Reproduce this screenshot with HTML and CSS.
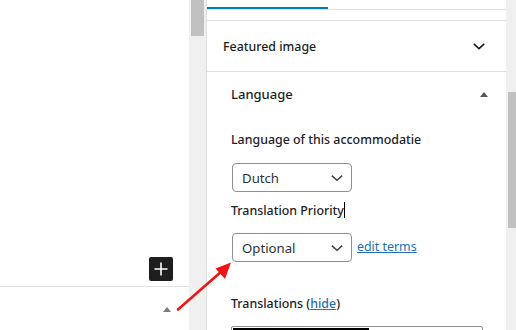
FILE: index.html
```html
<!DOCTYPE html>
<html>
    <head>
        <title>Language</title>
        <meta charset="UTF-8">
        <link rel="stylesheet" href="styles.css">
    </head>
    <body>
        <div class="canvas">
            <div class="canvas-space">
                <div class="inserter">
                    <svg width="24" height="24" viewBox="0 0 24 24"><path d="M12 5.5v13M5.5 12h13" stroke="#fff" stroke-width="1.6"/></svg>
                </div>
            </div>
            <div class="canvas-foot">
                <span class="tri tri-gray"></span>
            </div>
        </div>

        <div class="gutter"><div class="thumb"></div></div>

        <div class="sidebar">
            <div class="tabs">
                <div class="tab active"></div>
            </div>
            <div class="spacer"></div>

            <div class="panel">
                <span class="panel-title">Featured image</span>
                <svg class="chev" width="24" height="24" viewBox="0 0 24 24"><path d="M6.8 9.8 12 14.6l5.2-4.8" fill="none" stroke="#1e1e1e" stroke-width="1.6"/></svg>
            </div>

            <div class="postbox">
                <div class="postbox-head">
                    <span>Language</span>
                    <span class="tri"></span>
                </div>
                <div class="postbox-body">
                    <div class="label">Language of this accommodatie</div>
                    <div class="select sel-lang">
                        <span>Dutch</span>
                        <svg width="16" height="16" viewBox="0 0 16 16"><path d="M2.8 5.6 8 10.2l5.2-4.6" fill="none" stroke="#3c434a" stroke-width="1.5"/></svg>
                    </div>
                    <div class="label label-prio">Translation Priority<span class="caret"></span></div>
                    <div class="row">
                        <div class="select">
                            <span>Optional</span>
                            <svg width="16" height="16" viewBox="0 0 16 16"><path d="M2.8 5.6 8 10.2l5.2-4.6" fill="none" stroke="#3c434a" stroke-width="1.5"/></svg>
                        </div>
                        <a class="link" href="#">edit terms</a>
                    </div>
                    <div class="label label-trans">Translations (<a class="link" href="#">hide</a>)</div>
                    <div class="trans-box"><div class="trans-bar"></div></div>
                </div>
            </div>
        </div>

        <div class="rscroll"><div class="thumb"></div></div>

        <svg class="arrow" width="516" height="330" viewBox="0 0 516 330">
            <path d="M178 309.5 L222 271" stroke="#f01414" stroke-width="2.6" stroke-linecap="round"/>
            <path d="M231 262.5 L215.5 268.5 L225 279 Z" fill="#f01414"/>
        </svg>
    </body>
</html>
```

FILE: styles.css
```css
* { box-sizing: border-box; }

body {
    margin: 0;
    height: 330px;
    overflow: hidden;
    display: flex;
    font-family: "Noto Sans", "Open Sans", sans-serif;
    font-size: 12.4px;
    color: #1e1e1e;
    background: white;
    position: relative;
}

/* editor canvas */
.canvas {
    width: 189px;
    display: flex;
    flex-direction: column;
}

.canvas-space {
    flex: 1;
    display: flex;
    align-items: flex-end;
    justify-content: flex-end;
    padding: 0 16px 5px 0;
}

.inserter {
    width: 24px;
    height: 24px;
    background: #1e1e1e;
    border-radius: 2px;
    display: flex;
}

.canvas-foot {
    height: 44px;
    flex-shrink: 0;
    border-top: 1px solid #e0e0e0;
    display: flex;
    justify-content: flex-end;
    align-items: flex-start;
    padding: 20px 18px 0 0;
}

.tri {
    width: 0;
    height: 0;
    border-left: 4px solid transparent;
    border-right: 4px solid transparent;
    border-bottom: 5px solid #50575e;
}

.tri-gray { border-bottom-color: #787c82; }

/* scrollbars */
.gutter {
    width: 17px;
    flex-shrink: 0;
    background: #f0f0f0;
    padding: 0 2px;
}

.gutter .thumb {
    height: 36px;
    background: #c1c1c1;
}

.rscroll {
    width: 10px;
    flex-shrink: 0;
    background: #f0f0f0;
    padding: 92px 0 0 2px;
}

.rscroll .thumb {
    height: 136px;
    background: #c1c1c1;
}

/* sidebar */
.sidebar {
    width: 300px;
    flex-shrink: 0;
    border-left: 1px solid #e0e0e0;
    display: flex;
    flex-direction: column;
}

.sidebar > * { flex-shrink: 0; }

.tabs {
    height: 10px;
    border-bottom: 1px solid #e0e0e0;
    display: flex;
}

.tab.active {
    width: 121px;
    height: 10px;
    border-bottom: 2px solid #007cba;
    margin-top: -1px;
}

.spacer {
    height: 11px;
    border-bottom: 1px solid #e0e0e0;
}

.panel {
    height: 51px;
    border-bottom: 1px solid #e0e0e0;
    display: flex;
    align-items: center;
    justify-content: space-between;
    padding: 0 15px 0 16px;
}

.panel-title { font-weight: 500; }

.postbox-head {
    height: 44px;
    display: flex;
    align-items: center;
    justify-content: space-between;
    padding: 0 18px 0 24px;
    font-weight: 500;
    font-size: 13px;
}

.postbox-body {
    padding: 14px 0 0 24px;
}

.label {
    line-height: 20px;
    font-weight: 500;
    color: #1d2327;
}

.select {
    width: 120px;
    height: 29px;
    border: 1px solid #8c8f94;
    border-radius: 4px;
    display: flex;
    align-items: center;
    justify-content: space-between;
    padding: 0 6px 0 9px;
    font-size: 13.2px;
    color: #2c3338;
    margin-left: 1px;
}

.sel-lang { margin-top: 13px; }

.label-prio { margin-top: 9px; }

.caret {
    display: inline-block;
    width: 1px;
    height: 16px;
    background: #000;
    vertical-align: -3px;
}

.row {
    display: flex;
    align-items: center;
    gap: 5px;
    margin-top: 12px;
}

.row .link { margin-top: -3px; }

.link {
    color: #2271b1;
    text-decoration: underline;
}

.label-trans { margin-top: 32px; }

.trans-box {
    margin-top: 12px;
    width: 252px;
    height: 20px;
    border: 1px solid #8c8f94;
    border-radius: 2px 2px 0 0;
    padding: 1px;
}

.trans-bar {
    width: 136px;
    height: 10px;
    background: #000;
}

.arrow {
    position: absolute;
    left: 0;
    top: 0;
    pointer-events: none;
}
```
